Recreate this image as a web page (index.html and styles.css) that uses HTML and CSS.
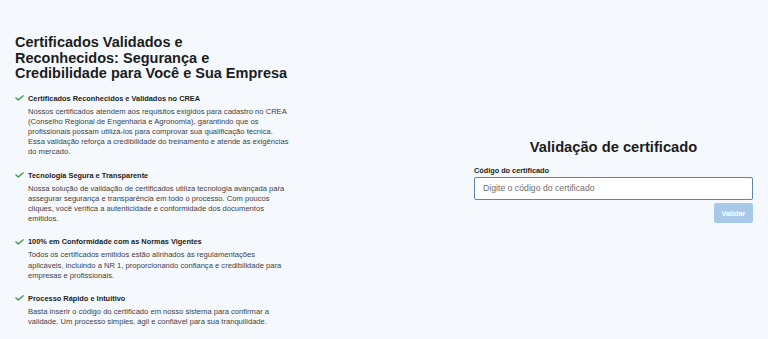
FILE: index.html
```html
<!DOCTYPE html>
<html lang="pt-BR">
<head>
    <meta charset="UTF-8">
    <meta name="viewport" content="width=device-width, initial-scale=1.0">
    <title>Validação de certificado</title>
    <link rel="stylesheet" href="styles.css">
</head>
<body>
    <main class="page">
        <section class="info">
            <h1>Certificados Validados e Reconhecidos: Segurança e Credibilidade para Você e Sua Empresa</h1>
            <ul class="features">
                <li class="feature">
                    <svg class="check" viewBox="0 0 9 6" fill="none"><path d="M0.8 2.8L3.2 5L8.2 0.8" stroke="#2f9444" stroke-width="1.2" stroke-linecap="round" stroke-linejoin="round"/></svg>
                    <div>
                        <h2>Certificados Reconhecidos e Validados no CREA</h2>
                        <p>Nossos certificados atendem aos requisitos exigidos para cadastro no CREA (Conselho Regional de Engenharia e Agronomia), garantindo que os profissionais possam utilizá-los para comprovar sua qualificação técnica. Essa validação reforça a credibilidade do treinamento e atende às exigências do mercado.</p>
                    </div>
                </li>
                <li class="feature">
                    <svg class="check" viewBox="0 0 9 6" fill="none"><path d="M0.8 2.8L3.2 5L8.2 0.8" stroke="#2f9444" stroke-width="1.2" stroke-linecap="round" stroke-linejoin="round"/></svg>
                    <div>
                        <h2>Tecnologia Segura e Transparente</h2>
                        <p>Nossa solução de validação de certificados utiliza tecnologia avançada para assegurar segurança e transparência em todo o processo. Com poucos cliques, você verifica a autenticidade e conformidade dos documentos emitidos.</p>
                    </div>
                </li>
                <li class="feature">
                    <svg class="check" viewBox="0 0 9 6" fill="none"><path d="M0.8 2.8L3.2 5L8.2 0.8" stroke="#2f9444" stroke-width="1.2" stroke-linecap="round" stroke-linejoin="round"/></svg>
                    <div>
                        <h2>100% em Conformidade com as Normas Vigentes</h2>
                        <p>Todos os certificados emitidos estão alinhados às regulamentações aplicáveis, incluindo a NR 1, proporcionando confiança e credibilidade para empresas e profissionais.</p>
                    </div>
                </li>
                <li class="feature">
                    <svg class="check" viewBox="0 0 9 6" fill="none"><path d="M0.8 2.8L3.2 5L8.2 0.8" stroke="#2f9444" stroke-width="1.2" stroke-linecap="round" stroke-linejoin="round"/></svg>
                    <div>
                        <h2>Processo Rápido e Intuitivo</h2>
                        <p>Basta inserir o código do certificado em nosso sistema para confirmar a validade. Um processo simples, ágil e confiável para sua tranquilidade.</p>
                    </div>
                </li>
            </ul>
        </section>
        <section class="validate">
            <h2 class="validate-title">Validação de certificado</h2>
            <form class="validate-form">
                <label for="code">Código do certificado</label>
                <input type="text" id="code" placeholder="Digite o código do certificado">
                <div class="actions">
                    <button type="submit" disabled>Validar</button>
                </div>
            </form>
        </section>
    </main>
</body>
</html>
```

FILE: styles.css
```css
:root {
    --bg-color: #f5f9fd;
    --text-color: #1c1c1c;
    --muted-color: #3f3f3f;
    --border-color: #5d84ab;
    --button-color: #a8c8e7;
}
body {
    margin: 0;
    background-color: var(--bg-color);
    color: var(--text-color);
    font-family: "Liberation Sans", Arial, sans-serif;
}
.page {
    display: grid;
    grid-template-columns: 275px 1fr;
    column-gap: 184px;
    align-items: center;
    padding: 35px 15px 0 15px;
}
.info h1 {
    margin: 0 0 11px 0;
    font-size: 14.5px;
    line-height: 15.5px;
    font-weight: bold;
}
.features {
    list-style: none;
    margin: 0;
    padding: 0;
}
.feature {
    display: flex;
    gap: 4px;
    margin-bottom: 12px;
}
.feature:last-child {
    margin-bottom: 0;
}
.check {
    width: 9px;
    height: 6px;
    flex-shrink: 0;
    margin-top: 2.5px;
}
.feature h2 {
    margin: 0 0 3px 0;
    font-size: 7.4px;
    line-height: 11px;
    font-weight: bold;
}
.feature p {
    margin: 0;
    font-size: 7.6px;
    line-height: 10.2px;
    color: var(--muted-color);
}
.validate-title {
    margin: 0 0 10px 0;
    text-align: center;
    font-size: 14.7px;
    line-height: 17px;
    font-weight: bold;
}
.validate-form label {
    display: block;
    font-size: 7.3px;
    line-height: 9px;
    font-weight: bold;
    margin-bottom: 1.5px;
}
.validate-form input {
    display: block;
    box-sizing: border-box;
    width: 100%;
    height: 23px;
    margin: 0;
    padding: 0 8px;
    border: 1.3px solid var(--border-color);
    border-radius: 2px;
    background-color: #fff;
    font-family: inherit;
    font-size: 8.7px;
}
.validate-form input::placeholder {
    color: #6e6e6e;
}
.actions {
    display: flex;
    justify-content: flex-end;
    margin-top: 3.5px;
}
.actions button {
    width: 39px;
    height: 19.5px;
    padding: 0;
    border: none;
    border-radius: 2px;
    background-color: var(--button-color);
    color: #fff;
    font-family: inherit;
    font-size: 7.3px;
    font-weight: bold;
}
```
